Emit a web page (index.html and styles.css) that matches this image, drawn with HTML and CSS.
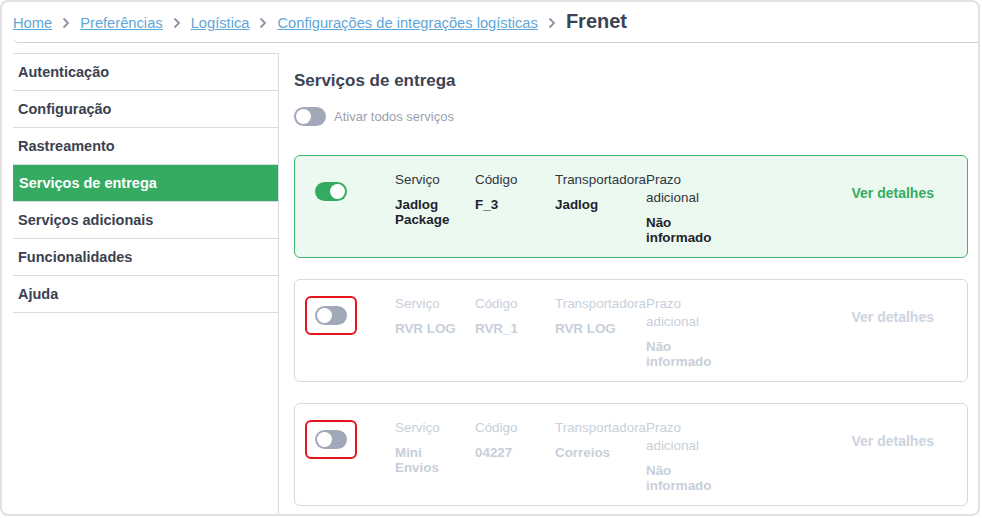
FILE: index.html
```html
<!DOCTYPE html>
<html lang="pt">
<head>
    <meta charset="UTF-8">
    <title>Frenet</title>
    <link rel="stylesheet" href="styles.css">
</head>
<body>

<div class="frame">
    <div class="breadcrumb">
        <a href="#">Home</a>
        <svg class="chev" width="8" height="12" viewBox="0 0 8 12"><path d="M1.5 1.5 L6 6 L1.5 10.5" fill="none" stroke="#8a93a3" stroke-width="1.8"/></svg>
        <a href="#">Preferências</a>
        <svg class="chev" width="8" height="12" viewBox="0 0 8 12"><path d="M1.5 1.5 L6 6 L1.5 10.5" fill="none" stroke="#8a93a3" stroke-width="1.8"/></svg>
        <a href="#">Logística</a>
        <svg class="chev" width="8" height="12" viewBox="0 0 8 12"><path d="M1.5 1.5 L6 6 L1.5 10.5" fill="none" stroke="#8a93a3" stroke-width="1.8"/></svg>
        <a href="#">Configurações de integrações logísticas</a>
        <svg class="chev" width="8" height="12" viewBox="0 0 8 12"><path d="M1.5 1.5 L6 6 L1.5 10.5" fill="none" stroke="#8a93a3" stroke-width="1.8"/></svg>
        <span class="current">Frenet</span>
    </div>

    <div class="layout">
        <ul class="side-menu">
            <li>Autenticação</li>
            <li>Configuração</li>
            <li>Rastreamento</li>
            <li class="active">Serviços de entrega</li>
            <li>Serviços adicionais</li>
            <li>Funcionalidades</li>
            <li>Ajuda</li>
        </ul>

        <div class="content">
            <h2 class="title">Serviços de entrega</h2>

            <div class="all-toggle">
                <span class="switch"></span>
                <span>Ativar todos serviços</span>
            </div>

            <div class="service-card on">
                <div class="switch-box"><span class="switch on"></span></div>
                <div class="col">
                    <div class="label">Serviço</div>
                    <div class="value">Jadlog Package</div>
                </div>
                <div class="col">
                    <div class="label">Código</div>
                    <div class="value">F_3</div>
                </div>
                <div class="col carrier">
                    <div class="label">Transportadora</div>
                    <div class="value">Jadlog</div>
                </div>
                <div class="col deadline">
                    <div class="label">Prazo adicional</div>
                    <div class="value">Não informado</div>
                </div>
                <a class="details" href="#">Ver detalhes</a>
            </div>

            <div class="service-card">
                <div class="switch-box flagged"><span class="switch"></span></div>
                <div class="col">
                    <div class="label">Serviço</div>
                    <div class="value">RVR LOG</div>
                </div>
                <div class="col">
                    <div class="label">Código</div>
                    <div class="value">RVR_1</div>
                </div>
                <div class="col carrier">
                    <div class="label">Transportadora</div>
                    <div class="value">RVR LOG</div>
                </div>
                <div class="col deadline">
                    <div class="label">Prazo adicional</div>
                    <div class="value">Não informado</div>
                </div>
                <a class="details" href="#">Ver detalhes</a>
            </div>

            <div class="service-card">
                <div class="switch-box flagged"><span class="switch"></span></div>
                <div class="col">
                    <div class="label">Serviço</div>
                    <div class="value">Mini Envios</div>
                </div>
                <div class="col">
                    <div class="label">Código</div>
                    <div class="value">04227</div>
                </div>
                <div class="col carrier">
                    <div class="label">Transportadora</div>
                    <div class="value">Correios</div>
                </div>
                <div class="col deadline">
                    <div class="label">Prazo adicional</div>
                    <div class="value">Não informado</div>
                </div>
                <a class="details" href="#">Ver detalhes</a>
            </div>
        </div>
    </div>
</div>

</body>
</html>
```

FILE: styles.css
```css
body, html {
    margin: 0;
    padding: 0;
    background: #fff;
    font-family: "Liberation Sans", Arial, sans-serif;
    color: #3b4150;
}

.frame {
    box-sizing: border-box;
    width: 980px;
    height: 516px;
    border: 2px solid #e2e2e2;
    border-radius: 8px;
    padding-left: 11px;
    overflow: hidden;
    display: flex;
    flex-direction: column;
}

.breadcrumb {
    flex-shrink: 0;
    height: 41px;
    display: flex;
    align-items: center;
    border-bottom: 1px solid #c8d3e0;
    border-bottom-left-radius: 5px;
    font-size: 14.7px;
    padding-top: 1px;
    box-sizing: border-box;
}

.breadcrumb a {
    color: #5fa6d9;
    text-decoration: underline;
}

.breadcrumb .chev {
    margin: 0 10px;
}

.breadcrumb .current {
    font-size: 20px;
    font-weight: bold;
    color: #3b4454;
    margin-top: -2px;
}

.layout {
    flex: 1;
    display: flex;
    min-height: 0;
}

/* menu lateral */
.side-menu {
    list-style: none;
    margin: 10px 0 0 0;
    padding: 0;
    width: 265px;
    border-top: 1px solid #d6dce6;
    border-right: 1px solid #d6dce6;
}

.side-menu li {
    height: 36px;
    line-height: 36px;
    padding-left: 5px;
    font-size: 14.5px;
    font-weight: bold;
    color: #3b4150;
    border-bottom: 1px solid #d6dce6;
}

.side-menu li.active {
    background-color: #35ab62;
    color: #fff;
    padding-left: 6px;
}

.content {
    flex: 1;
    padding: 27px 10px 0 15px;
}

.title {
    margin: 0;
    font-size: 17px;
    line-height: 21px;
    font-weight: bold;
    color: #3b4454;
}

.all-toggle {
    display: flex;
    align-items: center;
    margin-top: 16px;
    margin-bottom: 29px;
    font-size: 13px;
    color: #9aa1ae;
}

.all-toggle .switch {
    margin-right: 8px;
}

.switch {
    position: relative;
    display: inline-block;
    width: 32px;
    height: 19px;
    border-radius: 10px;
    background-color: #a1a9b8;
}

.switch::after {
    content: "";
    position: absolute;
    top: 2px;
    left: 2px;
    width: 15px;
    height: 15px;
    border-radius: 50%;
    background: #fff;
}

.switch.on {
    background-color: #35ab62;
}

.switch.on::after {
    left: 15px;
}

.service-card {
    box-sizing: border-box;
    height: 103px;
    margin-bottom: 21px;
    padding: 15px 33px 0 10px;
    display: flex;
    align-items: flex-start;
    border: 1px solid #d3dae4;
    border-radius: 6px;
    background: #fff;
}

.service-card.on {
    border-color: #41b46c;
    background-color: #ebf9f0;
}

.switch-box {
    box-sizing: border-box;
    width: 52px;
    height: 39px;
    margin-top: 1px;
    margin-right: 38px;
    border: 2px solid transparent;
    border-radius: 6px;
    display: flex;
    align-items: center;
    justify-content: center;
}

.switch-box.flagged {
    border-color: #e8141b;
}

.col {
    width: 70px;
    margin-right: 10px;
    font-size: 13.4px;
}

.col.carrier {
    width: 91px;
    margin-right: 0;
    white-space: nowrap;
}

.col.deadline {
    width: 72px;
}

.label {
    line-height: 18px;
    color: #2f3440;
}

.value {
    margin-top: 8px;
    line-height: 15px;
    font-weight: bold;
    color: #1f232b;
}

.details {
    margin-left: auto;
    margin-top: 13px;
    line-height: 18px;
    font-size: 14px;
    font-weight: bold;
    color: #35ab62;
    text-decoration: none;
}

.service-card:not(.on) .label,
.service-card:not(.on) .value {
    color: #c7cfda;
}

.service-card:not(.on) .details {
    color: #cbd4e0;
}
```
